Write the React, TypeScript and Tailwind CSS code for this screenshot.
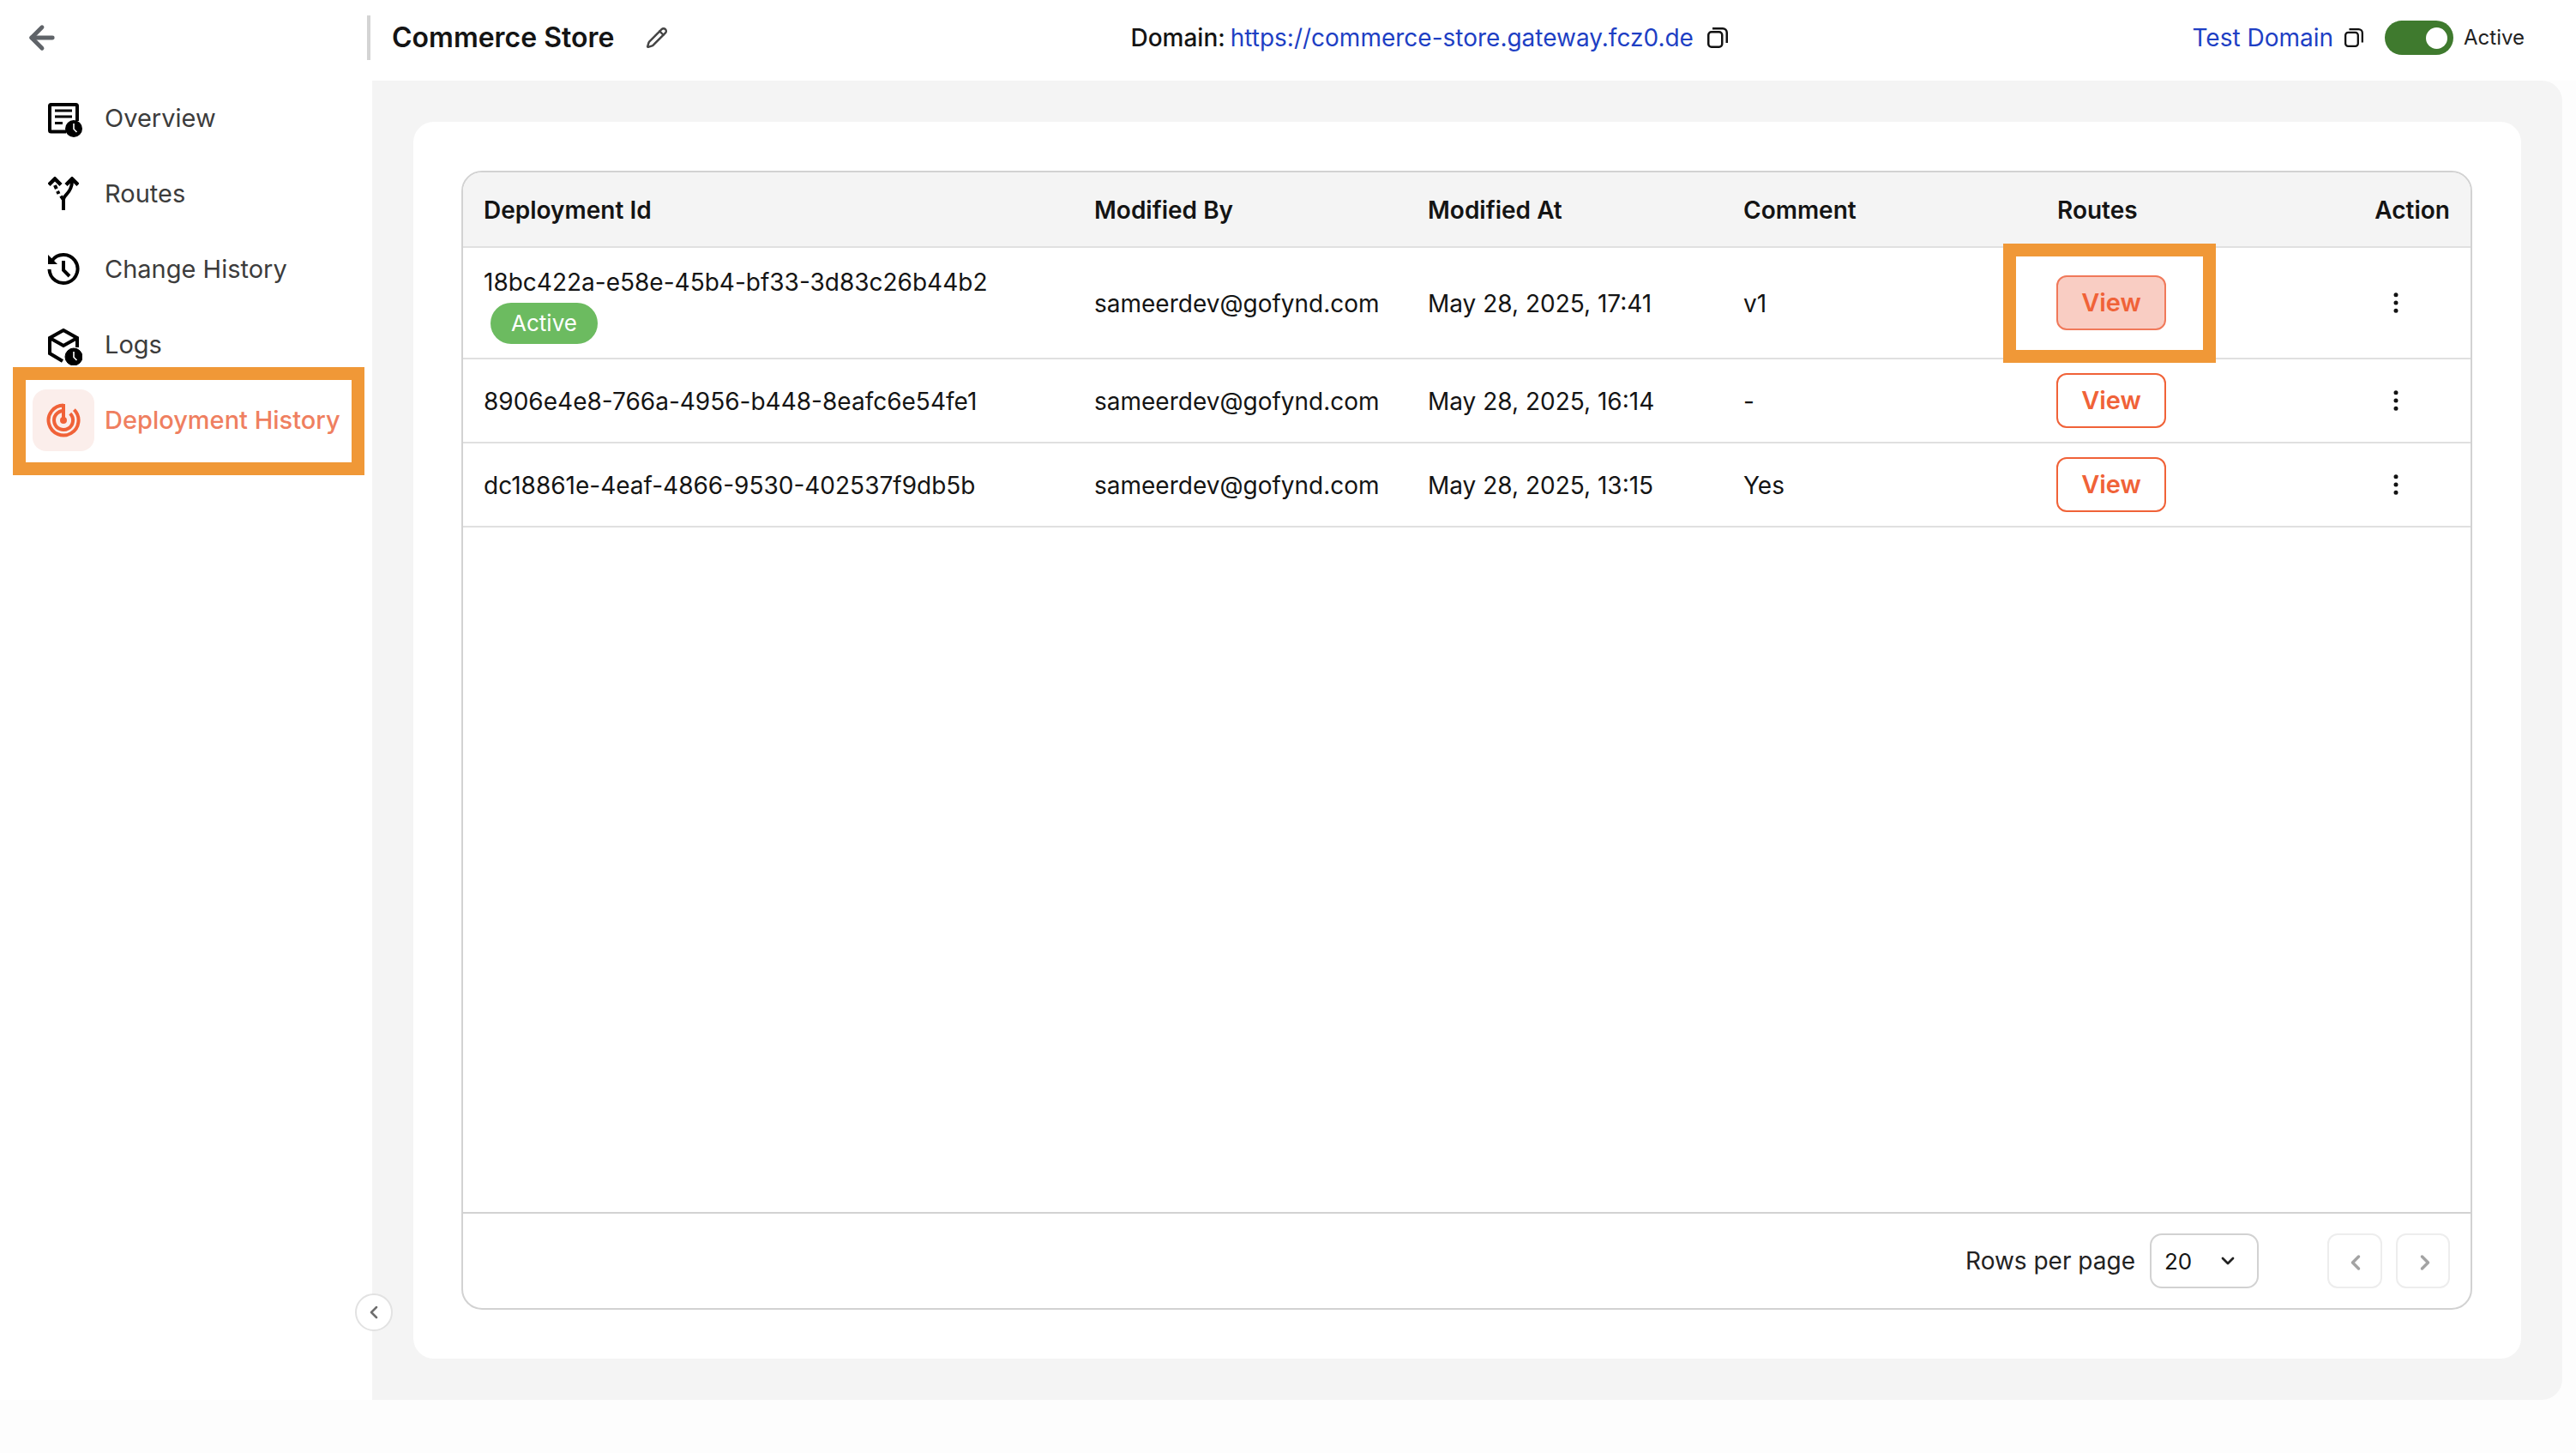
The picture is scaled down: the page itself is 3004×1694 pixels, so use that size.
import { ArrowLeft, ChevronDown, ChevronLeft, ChevronRight, EllipsisVertical, Pencil } from "lucide-react"
import type { ReactNode } from "react"

const font = { fontFamily: "Inter, sans-serif" }

const rows = [
  { id: "18bc422a-e58e-45b4-bf33-3d83c26b44b2", by: "sameerdev@gofynd.com", at: "May 28, 2025, 17:41", comment: "v1", active: true },
  { id: "8906e4e8-766a-4956-b448-8eafc6e54fe1", by: "sameerdev@gofynd.com", at: "May 28, 2025, 16:14", comment: "-", active: false },
  { id: "dc18861e-4eaf-4866-9530-402537f9db5b", by: "sameerdev@gofynd.com", at: "May 28, 2025, 13:15", comment: "Yes", active: false },
]

const colClass = "grid grid-cols-[712px_389px_368px_366px_368px_1fr] items-center"

function ClockBadge({ cy = 30 }: { cy?: number }) {
  return (
    <g>
      <circle cx="30" cy={cy} r="10" fill="#000" />
      <path d={`M30 ${cy - 6}v6.5l3.5 3.5`} stroke="#fff" strokeWidth="1.6" fill="none" />
    </g>
  )
}

function OverviewIcon() {
  return (
    <svg className="ml-[4px] mt-[4px]" width="40" height="40" viewBox="0 0 40 40" fill="none">
      <path d="M21 33.5H3.5A1.5 1.5 0 0 1 2 32V3.5A1.5 1.5 0 0 1 3.5 2h29A1.5 1.5 0 0 1 34 3.5V21" stroke="#000" strokeWidth="4" />
      <path d="M8 9h20M8 16h20M8 23.5h9" stroke="#000" strokeWidth="3" />
      <ClockBadge />
    </svg>
  )
}

function RoutesIcon() {
  return (
    <svg width="36" height="40" viewBox="0 0 36 40" fill="none" stroke="#000">
      <path d="M18 39V27c0-6 10-8 10-22" strokeWidth="4" />
      <path d="M21 9.5 28 2.5 35 9.5" strokeWidth="4.5" />
      <path d="M8 10 12.5 20M15 22.5 18 27" strokeWidth="4" strokeDasharray="4.5 3" />
      <path d="M1 9.5 8 2.5 15 9.5" strokeWidth="4.5" />
    </svg>
  )
}

function HistoryIcon() {
  return (
    <svg width="38" height="38" viewBox="0 0 38 38" fill="none" stroke="#000">
      <path d="M5.5 9A16.5 16.5 0 1 1 2.5 19" strokeWidth="4" />
      <path d="M1 2v11h11z" fill="#000" stroke="none" />
      <path d="M19 9v11l7 7" strokeWidth="4" />
    </svg>
  )
}

function LogsIcon() {
  return (
    <svg className="ml-[4px] mt-[5px]" width="40" height="43" viewBox="0 0 40 43" fill="none" stroke="#000">
      <path d="M17 38 2 29V11L18 2l16 9v11" strokeWidth="4" />
      <path d="M2 11l16 9 16-9" strokeWidth="4" />
      <ClockBadge cy={33} />
    </svg>
  )
}

function RadarIcon() {
  return (
    <svg width="40" height="40" viewBox="0 0 40 40" fill="none" stroke="#f06238" strokeWidth="4">
      <path d="M20 2.5A17.5 17.5 0 1 0 32.4 7.6" />
      <path d="M20 9A11 11 0 1 0 27.8 12.2" />
      <path d="M20 1v19" />
      <circle cx="20" cy="20" r="2" fill="#f06238" />
    </svg>
  )
}

function CopyIcon({ size = 24 }: { size?: number }) {
  return (
    <svg width={size} height={size} viewBox="0 0 24 24" fill="none" stroke="#111" strokeWidth="2.5">
      <rect x="1.25" y="5.25" width="16" height="17.5" rx="3.5" />
      <path d="M6 1.25h12a4.75 4.75 0 0 1 4.75 4.75v12" />
    </svg>
  )
}

function NavItem({ icon, label, active }: { icon: ReactNode; label: string; active?: boolean }) {
  return (
    <div className="flex h-[72px] items-center gap-[12px]">
      <div className={active ? "flex h-[72px] w-[72px] items-center justify-center rounded-[16px] bg-[#fbeeeb]" : "flex h-[72px] w-[72px] items-center justify-center"}>
        {icon}
      </div>
      <span className={active ? "text-[29px] font-medium text-[#ef7f60]" : "text-[29px] text-[#3c3c3c]"}>{label}</span>
    </div>
  )
}

function ViewButton({ active }: { active: boolean }) {
  return (
    <button className={active ? "h-[64px] w-[128px] rounded-[12px] border-2 border-[#f0795a] bg-[#f9cdc3] text-[29px] font-semibold text-[#f06238]" : "h-[64px] w-[128px] rounded-[12px] border-2 border-[#f06238] bg-white text-[29px] font-semibold text-[#f06238]"}>
      View
    </button>
  )
}

export default function App() {
  return (
    <div style={font} className="relative flex h-[1694px] w-[3004px] flex-col overflow-hidden bg-[#fdfdfd] text-[#141414]">
      <header className="flex h-[94px] items-center bg-white pb-[6px]">
        <div className="flex w-[428px] items-center pl-[28px]">
          <ArrowLeft size={42} strokeWidth={2.75} color="#5f6368" />
        </div>
        <div className="h-[52px] w-[4px] bg-[#d4d4d4]" />
        <h1 className="ml-[25px] text-[32px] font-semibold">Commerce Store</h1>
        <Pencil className="ml-[37px]" size={26} strokeWidth={2.25} color="#444" />
        <div className="ml-[539px] flex items-center">
          <span className="text-[28px] font-medium">Domain:</span>
          <span className="ml-[6px] text-[28px] text-[#1e3fc4]">https://commerce-store.gateway.fcz0.de</span>
          <span className="ml-[16px]"><CopyIcon /></span>
        </div>
        <div className="ml-auto flex items-center pr-[60px]">
          <span className="text-[28px] text-[#1e3fc4]">Test Domain</span>
          <span className="ml-[13px]"><CopyIcon size={22} /></span>
          <div className="ml-[25px] flex h-[40px] w-[80px] items-center justify-end rounded-full bg-[#3f7a2e] pr-[7px]">
            <div className="h-[25px] w-[25px] rounded-full bg-white" />
          </div>
          <span className="ml-[12px] text-[24px] text-[#222]">Active</span>
        </div>
      </header>

      <div className="flex h-[1538px]">
        <aside className="flex w-[434px] flex-col gap-[16px] bg-white pl-[38px] pt-[8px]">
          <NavItem icon={<OverviewIcon />} label="Overview" />
          <NavItem icon={<RoutesIcon />} label="Routes" />
          <NavItem icon={<HistoryIcon />} label="Change History" />
          <NavItem icon={<LogsIcon />} label="Logs" />
          <NavItem icon={<RadarIcon />} label="Deployment History" active />
        </aside>

        <main className="h-full w-[2554px] rounded-r-[24px] bg-[#f4f4f4] p-[48px]">
          <div className="h-full w-full rounded-[24px] bg-white pb-[57px] pl-[56px] pr-[57px] pt-[57px]">
            <div className="flex h-full flex-col overflow-hidden rounded-[24px] border-2 border-[#d2d2d2]">
              <div className={`${colClass} h-[88px] border-b-2 border-[#e0e0e0] bg-[#f4f4f4] pt-[2px] text-[28px] font-semibold`}>
                <div className="pl-[24px]">Deployment Id</div>
                <div className="pl-[24px]">Modified By</div>
                <div className="pl-[24px]">Modified At</div>
                <div className="pl-[24px]">Comment</div>
                <div className="pl-[24px]">Routes</div>
                <div className="pr-[24px] text-right">Action</div>
              </div>
              {rows.map((row) => (
                <div key={row.id} className={`${colClass} border-b-2 border-[#e0e0e0] text-[28px] ${row.active ? "h-[130px]" : "h-[98px]"}`}>
                  <div className="pl-[24px] pt-[2px]">
                    <div>{row.id}</div>
                    {row.active && (
                      <span className="ml-[8px] mt-[3px] inline-flex h-[48px] w-[125px] items-center justify-center rounded-full bg-[#6cbb60] text-[26px] text-white">
                        Active
                      </span>
                    )}
                  </div>
                  <div className="pl-[24px] pt-[2px]">{row.by}</div>
                  <div className="pl-[24px] pt-[2px]">{row.at}</div>
                  <div className="pl-[24px] pt-[2px]">{row.comment}</div>
                  <div className="pl-[23px]"><ViewButton active={row.active} /></div>
                  <div className="pl-[35px]"><EllipsisVertical size={32} strokeWidth={1.75} color="#111" /></div>
                </div>
              ))}
              <div className="flex-1" />
              <div className="flex h-[112px] items-center justify-end border-t-2 border-[#d2d2d2] pr-[24px]">
                <span className="text-[28px] text-[#222]">Rows per page</span>
                <div className="ml-[17px] flex h-[64px] w-[127px] items-center justify-between rounded-[14px] border-2 border-[#d2d2d2] pl-[15px] pr-[22px] text-[26px]">
                  20
                  <ChevronDown size={24} strokeWidth={2.75} color="#222" />
                </div>
                <div className="ml-[80px] flex h-[64px] w-[64px] items-center justify-center rounded-[12px] border-2 border-[#ededed] pl-[2px] pt-[3px]">
                  <ChevronLeft size={28} strokeWidth={3} color="#a3a3a3" />
                </div>
                <div className="ml-[16px] flex h-[64px] w-[63px] items-center justify-center rounded-[12px] border-2 border-[#ededed] pl-[4px] pt-[3px]">
                  <ChevronRight size={28} strokeWidth={3} color="#a3a3a3" />
                </div>
              </div>
            </div>
          </div>
        </main>
      </div>

      {/* collapse handle, sits over the sidebar edge */}
      <div className="absolute left-[414px] top-[1508px] flex h-[44px] w-[44px] items-center justify-center rounded-full border-2 border-[#e2e2e2] bg-white">
        <ChevronLeft size={24} strokeWidth={2.5} color="#6e6e6e" />
      </div>

      {/* orange highlight boxes */}
      <div className="absolute left-[15px] top-[428px] h-[126px] w-[410px] border-[15px] border-[#f09837]" />
      <div className="absolute left-[2336px] top-[284px] h-[139px] w-[248px] border-[15px] border-[#f09837]" />
    </div>
  )
}
